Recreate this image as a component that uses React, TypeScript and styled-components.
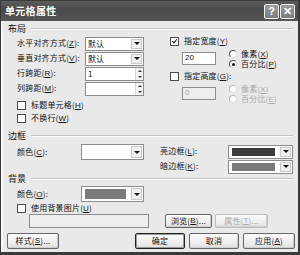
import React from "react";
import styled, { createGlobalStyle, css } from "styled-components";

const Global = createGlobalStyle`
  html, body { margin: 0; padding: 0; background: #e9e9e9; }
  body { font-family: "Noto Sans CJK SC", "Liberation Sans", sans-serif; font-size: 8px; line-height: 10px; color: #111; }
  * { box-sizing: border-box; }
`;

const Window = styled.div`
  width: 300px;
  height: 255px;
  background: #e9e9e9;
  border: 1px solid #3a3a3a;
  border-bottom-width: 3px;
  border-right-width: 2px;
  display: flex;
  flex-direction: column;
  overflow: hidden;
`;

const TitleBar = styled.div`
  height: 20px;
  flex: none;
  background: linear-gradient(#5c5c5c, #4a4a4a 40%, #555);
  display: flex;
  align-items: center;
  padding: 0 3px 0 4px;
`;

const Title = styled.div`
  color: #fff;
  font-weight: 700;
  font-size: 10px;
  letter-spacing: 0.3px;
  flex: 1;
`;

const TitleButton = styled.div`
  width: 15px;
  height: 15px;
  margin-left: 1px;
  border: 1px solid #f2f2f2;
  border-radius: 2px;
  background: linear-gradient(#9a9a9a, #7c7c7c);
  color: #fff;
  font-family: "Liberation Sans", sans-serif;
  font-weight: 700;
  font-size: 11px;
  display: flex;
  align-items: center;
  justify-content: center;
  line-height: 1;
`;

const Body = styled.div`
  flex: 1;
  display: flex;
  flex-direction: column;
  padding: 0 5px 0 5px;
  border-left: 2px solid #f7f7f7;
`;

const GroupHeader = styled.div<{ $h: number }>`
  height: ${(p) => p.$h}px;
  display: flex;
  align-items: center;
  gap: 5px;
  font-size: 9px;
  &::after {
    content: "";
    flex: 1;
    height: 0;
    border-top: 1px solid #c4c4c4;
    border-bottom: 1px solid #fbfbfb;
  }
`;

const LayoutGrid = styled.div`
  display: flex;
  height: 94px;
`;

const LeftCol = styled.div`
  width: 157px;
  padding-left: 9px;
  display: flex;
  flex-direction: column;
`;

const RightCol = styled.div`
  flex: 1;
  padding-left: 5px;
  display: flex;
  flex-direction: column;
`;

const Row = styled.div<{ $h: number; $label?: number }>`
  height: ${(p) => p.$h}px;
  display: flex;
  align-items: center;
  flex: none;
  & > label:first-child {
    width: ${(p) => p.$label ?? 68}px;
    flex: none;
  }
`;

const Label = styled.label<{ $disabled?: boolean }>`
  white-space: nowrap;
  letter-spacing: 0.2px;
  ${(p) =>
    p.$disabled &&
    css`
      color: #a8a8a8;
    `}
`;

const U = styled.span`
  text-decoration: underline;
  font-family: "Liberation Sans", sans-serif;
  font-size: 8px;
`;

const Field = styled.div<{ $w: number; $h?: number; $disabled?: boolean }>`
  width: ${(p) => p.$w}px;
  height: ${(p) => p.$h ?? 14}px;
  flex: none;
  border: 1px solid #8c8c8c;
  background: ${(p) => (p.$disabled ? "#eeeeee" : "#fff")};
  color: ${(p) => (p.$disabled ? "#a0a0a0" : "#111")};
  display: flex;
  align-items: center;
  padding-left: 2px;
  font-family: "Liberation Sans", "Noto Sans CJK SC", sans-serif;
  font-size: 8px;
`;

const FieldText = styled.span`
  flex: 1;
  font-family: "Noto Sans CJK SC", sans-serif;
`;

const DropButton = styled.div`
  width: 11px;
  align-self: stretch;
  margin: 1px;
  background: #f0f0f0;
  border: 1px solid #c8c8c8;
  display: flex;
  align-items: center;
  justify-content: center;
  &::after {
    content: "";
    border-left: 3px solid transparent;
    border-right: 3px solid transparent;
    border-top: 3px solid #111;
  }
`;

const SpinBox = styled.div`
  width: 8px;
  align-self: stretch;
  display: flex;
  flex-direction: column;
  border-left: 1px solid #d6d6d6;
`;

const SpinHalf = styled.div<{ $up?: boolean }>`
  flex: 1;
  background: #f3f3f3;
  display: flex;
  align-items: center;
  justify-content: center;
  &::after {
    content: "";
    border-left: 2px solid transparent;
    border-right: 2px solid transparent;
    ${(p) =>
      p.$up
        ? css`
            border-bottom: 2px solid #333;
          `
        : css`
            border-top: 2px solid #333;
          `}
  }
`;

const Swatch = styled.div<{ $c: string }>`
  flex: 1;
  align-self: stretch;
  margin: 2px 4px 2px 1px;
  background: ${(p) => p.$c};
`;

const Check = styled.span<{ $checked?: boolean }>`
  width: 9px;
  height: 9px;
  flex: none;
  border: 1px solid #4a4a4a;
  background: #fff;
  margin-right: 5px;
  position: relative;
  ${(p) =>
    p.$checked &&
    css`
      &::after {
        content: "";
        position: absolute;
        left: 2px;
        top: 0px;
        width: 2px;
        height: 4px;
        border-right: 1.5px solid #111;
        border-bottom: 1.5px solid #111;
        transform: rotate(40deg);
      }
    `}
`;

const Radio = styled.span<{ $on?: boolean; $disabled?: boolean }>`
  width: 8px;
  height: 8px;
  flex: none;
  border-radius: 50%;
  border: 1px solid ${(p) => (p.$disabled ? "#b8b8b8" : "#555")};
  border-right-color: #ddd;
  border-bottom-color: #ddd;
  background: #fff;
  margin-right: 4px;
  display: flex;
  align-items: center;
  justify-content: center;
  ${(p) =>
    p.$on &&
    css`
      &::after {
        content: "";
        width: 3px;
        height: 3px;
        border-radius: 50%;
        background: #111;
      }
    `}
`;

const Spacer = styled.div<{ $h: number }>`
  height: ${(p) => p.$h}px;
  flex: none;
`;

const Indent = styled.div<{ $l: number }>`
  padding-left: ${(p) => p.$l}px;
  display: flex;
  align-items: center;
  flex: none;
`;

const RadioStack = styled.div`
  display: flex;
  flex-direction: column;
  margin-left: 13px;
  margin-top: 2px;
`;

const RadioRow = styled.div`
  height: 10px;
  display: flex;
  align-items: center;
`;

const TwoCols = styled.div`
  display: flex;
`;

const BtnRow = styled.div`
  display: flex;
  align-items: center;
  gap: 3px;
`;

const Button = styled.div<{ $w: number; $default?: boolean; $disabled?: boolean }>`
  width: ${(p) => p.$w}px;
  height: ${(p) => (p.$disabled !== undefined ? 14 : 16)}px;
  flex: none;
  border: 1px solid ${(p) => (p.$default ? "#222" : "#666")};
  border-radius: 2px;
  background: linear-gradient(#fbfbfb, #ececec 70%, #dcdcdc);
  box-shadow: ${(p) => (p.$default ? "inset 0 0 0 1px #9a9a9a" : "inset -1px -1px 0 #cfcfcf")};
  display: flex;
  align-items: center;
  justify-content: center;
  white-space: nowrap;
  letter-spacing: 0.2px;
  color: ${(p) => (p.$disabled ? "#a8a8a8" : "#111")};
  ${(p) =>
    p.$disabled &&
    css`
      border-color: #bdbdbd;
    `}
`;

const Footer = styled.div`
  margin-top: auto;
  height: 27px;
  display: flex;
  align-items: flex-start;
  padding-top: 5px;
  margin-left: -5px;
  margin-right: -5px;
  padding-left: 4px;
  padding-right: 3px;
`;

const FooterRight = styled.div`
  margin-left: auto;
  display: flex;
  gap: 4px;
`;

const Select = ({ w, text, swatch, h }: { w: number; text?: string; swatch?: string; h?: number }) => (
  <Field $w={w} $h={h}>
    {swatch ? <Swatch $c={swatch} /> : <FieldText>{text}</FieldText>}
    <DropButton />
  </Field>
);

const Spinner = ({ w, text }: { w: number; text?: string }) => (
  <Field $w={w}>
    <FieldText>{text}</FieldText>
    <SpinBox>
      <SpinHalf $up />
      <SpinHalf />
    </SpinBox>
  </Field>
);

export default function App() {
  return (
    <>
      <Global />
      <Window>
        <TitleBar>
          <Title>单元格属性</Title>
          <TitleButton>?</TitleButton>
          <TitleButton>✕</TitleButton>
        </TitleBar>
        <Body>
          <GroupHeader $h={15}>布局</GroupHeader>
          <LayoutGrid>
            <LeftCol>
              <Row $h={15}>
                <Label>水平对齐方式(<U>Z</U>):</Label>
                <Select w={59} text="默认" />
              </Row>
              <Row $h={15}>
                <Label>垂直对齐方式(<U>V</U>):</Label>
                <Select w={59} text="默认" />
              </Row>
              <Row $h={15}>
                <Label>行跨距(<U>R</U>):</Label>
                <Spinner w={59} text="1" />
              </Row>
              <Row $h={15}>
                <Label>列跨距(<U>M</U>):</Label>
                <Spinner w={59} />
              </Row>
              <Spacer $h={3} />
              <Row $h={13}>
                <Check />
                <Label>标题单元格(<U>H</U>)</Label>
              </Row>
              <Row $h={13}>
                <Check />
                <Label>不换行(<U>W</U>)</Label>
              </Row>
            </LeftCol>
            <RightCol>
              <Row $h={11}>
                <Check $checked />
                <Label>指定宽度(<U>Y</U>)</Label>
              </Row>
              <Indent $l={12}>
                <Field $w={34} $h={13}>20</Field>
                <RadioStack>
                  <RadioRow>
                    <Radio />
                    <Label>像素(<U>X</U>)</Label>
                  </RadioRow>
                  <RadioRow>
                    <Radio $on />
                    <Label>百分比(<U>P</U>)</Label>
                  </RadioRow>
                </RadioStack>
              </Indent>
              <Spacer $h={1} />
              <Row $h={12}>
                <Check />
                <Label>指定高度(<U>G</U>):</Label>
              </Row>
              <Indent $l={12}>
                <Field $w={34} $h={13} $disabled>
                  0
                </Field>
                <RadioStack>
                  <RadioRow>
                    <Radio $disabled />
                    <Label $disabled>像素(<U>X</U>)</Label>
                  </RadioRow>
                  <RadioRow>
                    <Radio $disabled />
                    <Label $disabled>百分比(<U>E</U>)</Label>
                  </RadioRow>
                </RadioStack>
              </Indent>
            </RightCol>
          </LayoutGrid>
          <GroupHeader $h={12}>边框</GroupHeader>
          <TwoCols>
            <LeftCol>
              <Spacer $h={2} />
              <Row $h={16} $label={64}>
                <Label>颜色(<U>C</U>):</Label>
                <Select w={63} h={16} />
              </Row>
            </LeftCol>
            <RightCol>
              <Spacer $h={2} />
              <Row $h={15}>
                <Label>亮边框(<U>L</U>):</Label>
                <Select w={65} swatch="#3c3c3c" />
              </Row>
              <Row $h={15}>
                <Label>暗边框(<U>K</U>):</Label>
                <Select w={65} swatch="#7a7a7a" />
              </Row>
            </RightCol>
          </TwoCols>
          <GroupHeader $h={10}>背景</GroupHeader>
          <LeftCol>
            <Spacer $h={2} />
            <Row $h={16} $label={64}>
              <Label>颜色(<U>O</U>):</Label>
              <Select w={63} h={16} swatch="#7a7a7a" />
            </Row>
            <Row $h={12}>
              <Check />
              <Label>使用背景图片(<U>U</U>)</Label>
            </Row>
          </LeftCol>
          <TwoCols>
            <Indent $l={21}>
              <Field $w={120} $h={14} $disabled />
            </Indent>
            <Indent $l={16}>
              <BtnRow>
                <Button $w={47} $disabled={false}>
                  浏览(<U>B</U>)...
                </Button>
                <Button $w={53} $disabled>
                  属性(<U>T</U>)...
                </Button>
              </BtnRow>
            </Indent>
          </TwoCols>
          <Footer>
            <Button $w={52}>
              样式(<U>S</U>)...
            </Button>
            <FooterRight>
              <Button $w={50} $default>
                确定
              </Button>
              <Button $w={50}>取消</Button>
              <Button $w={52}>
                应用(<U>A</U>)
              </Button>
            </FooterRight>
          </Footer>
        </Body>
      </Window>
    </>
  );
}
